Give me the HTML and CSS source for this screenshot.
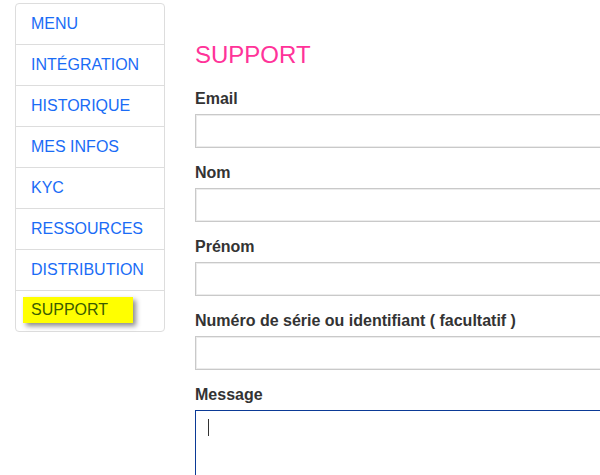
FILE: index.html
```html
<!DOCTYPE html>
<html lang="fr">
<head>
  <meta charset="UTF-8">
  <meta name="viewport" content="width=device-width, initial-scale=1.0">
  <title>Support</title>
  <link rel="stylesheet" href="styles.css">
</head>
<body>
  <div class="page">
    <ul class="side-menu">
      <li class="menu-item"><a href="#">MENU</a></li>
      <li class="menu-item"><a href="#">INTÉGRATION</a></li>
      <li class="menu-item"><a href="#">HISTORIQUE</a></li>
      <li class="menu-item"><a href="#">MES INFOS</a></li>
      <li class="menu-item"><a href="#">KYC</a></li>
      <li class="menu-item"><a href="#">RESSOURCES</a></li>
      <li class="menu-item"><a href="#">DISTRIBUTION</a></li>
      <li class="menu-item active"><a href="#" class="highlight">SUPPORT</a></li>
    </ul>

    <div class="content">
      <h3 class="page-title">SUPPORT</h3>

      <form class="support-form">
        <div class="form-group">
          <label for="email">Email</label>
          <input type="email" id="email" class="form-control">
        </div>
        <div class="form-group">
          <label for="nom">Nom</label>
          <input type="text" id="nom" class="form-control">
        </div>
        <div class="form-group">
          <label for="prenom">Prénom</label>
          <input type="text" id="prenom" class="form-control">
        </div>
        <div class="form-group">
          <label for="serial">Numéro de série ou identifiant ( facultatif )</label>
          <input type="text" id="serial" class="form-control">
        </div>
        <div class="form-group">
          <label for="message">Message</label>
          <div class="textarea-wrap">
            <textarea id="message" class="form-control message-box"></textarea>
            <span class="caret"></span>
          </div>
        </div>
      </form>
    </div>
  </div>
</body>
</html>
```

FILE: styles.css
```css
* {
  box-sizing: border-box;
}

html, body {
  margin: 0;
  padding: 0;
  background: #fff;
  overflow: hidden;
}

body {
  font-family: "Liberation Sans", Arial, sans-serif;
  color: #333;
}

.page {
  display: flex;
  align-items: flex-start;
  padding: 3px 0 0 15px;
}

/* sidebar */
.side-menu {
  list-style: none;
  margin: 0;
  padding: 0;
  width: 150px;
  flex-shrink: 0;
  border: 1px solid #ddd;
  border-radius: 4px;
}

.menu-item {
  padding: 8px 15px;
  border-bottom: 1px solid #ddd;
  font-size: 16px;
  line-height: 24px;
}

.menu-item a {
  color: #1a6cf6;
  text-decoration: none;
}

.menu-item.active {
  border-bottom: none;
  padding: 6px 7px 8px;
}

.menu-item .highlight {
  display: inline-block;
  background: #ffff00;
  color: #3b5c00;
  padding: 1px 25px 1px 8px;
  box-shadow: 3px 3px 5px rgba(0, 0, 0, 0.45);
}

/* main */
.content {
  flex: 1;
  min-width: 0;
  margin-left: 30px;
  overflow: hidden;
}

.page-title {
  margin: 39px 0 21px;
  font-size: 24px;
  font-weight: normal;
  line-height: 1.1;
  color: #ff3399;
}

.form-group {
  margin-bottom: 15px;
}

label {
  display: block;
  font-size: 16px;
  font-weight: bold;
  line-height: 20px;
  margin-bottom: 5px;
  color: #333;
}

.form-control {
  display: block;
  width: 500px;
  height: 34px;
  padding: 6px 12px;
  font-family: inherit;
  font-size: 14px;
  border: 1px solid #c9c9c9;
  border-radius: 0;
  box-shadow: inset 0 0 0 1px #ececec;
  background: #fff;
}

.textarea-wrap {
  position: relative;
}

.message-box {
  height: 120px;
  resize: none;
  border-color: #0b3a96;
  box-shadow: none;
  outline: none;
}

.caret {
  position: absolute;
  left: 13px;
  top: 9px;
  width: 1px;
  height: 17px;
  background: #333;
}
```
